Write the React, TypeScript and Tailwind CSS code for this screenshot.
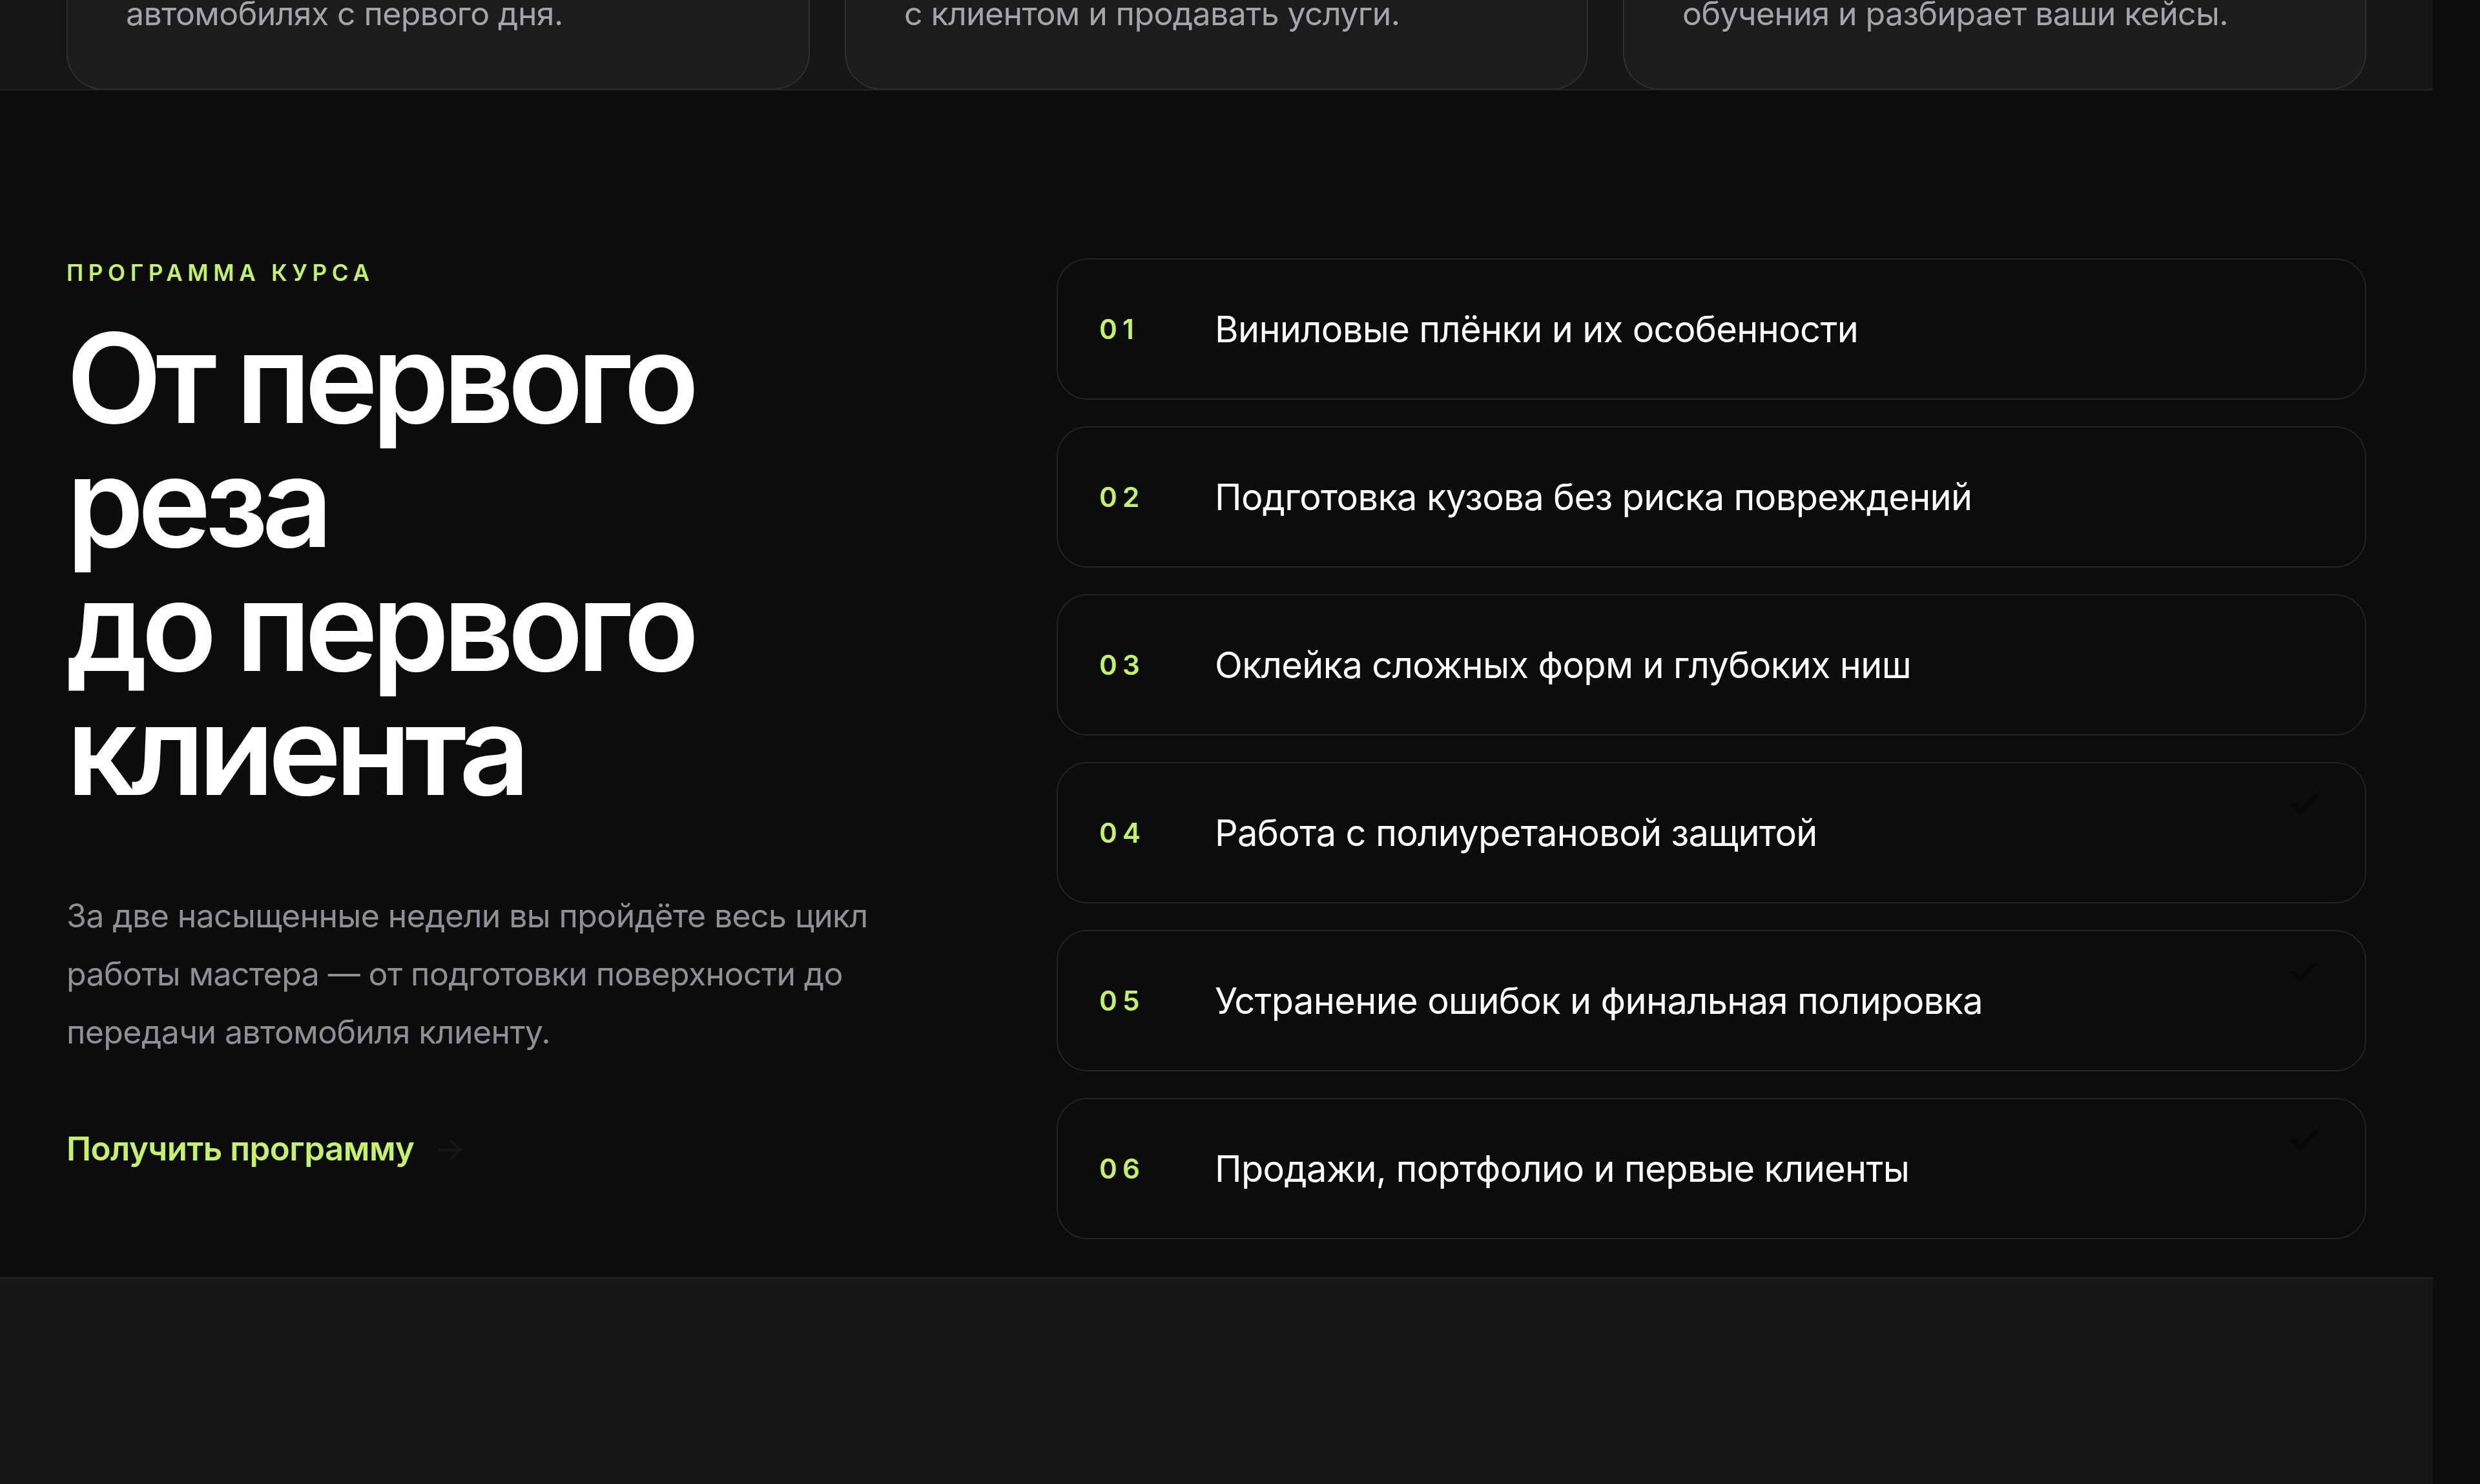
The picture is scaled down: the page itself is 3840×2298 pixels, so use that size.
import React from "react";
import { Check } from "lucide-react";

const cards = [
  ["Отработаете навыки на реальных", "автомобилях с первого дня."],
  ["Научитесь правильно общаться", "с клиентом и продавать услуги."],
  ["Куратор сопровождает на всём пути", "обучения и разбирает ваши кейсы."],
];

const modules = [
  { n: "01", t: "Виниловые плёнки и их особенности", done: false },
  { n: "02", t: "Подготовка кузова без риска повреждений", done: false },
  { n: "03", t: "Оклейка сложных форм и глубоких ниш", done: false },
  { n: "04", t: "Работа с полиуретановой защитой", done: true },
  { n: "05", t: "Устранение ошибок и финальная полировка", done: true },
  { n: "06", t: "Продажи, портфолио и первые клиенты", done: true },
];

export default function App() {
  return (
    <div
      className="flex w-[3840px] h-[2298px] overflow-hidden bg-[#0c0c0c]"
      style={{ fontFamily: "Inter, 'Noto Sans', sans-serif" }}
    >
      <div className="w-[3767px] shrink-0 flex flex-col">
        {/* top section (scrolled) */}
        <section className="h-[140px] shrink-0 bg-[#151615] border-b-2 border-[#222322] overflow-hidden flex items-end px-[103px]">
          <div className="grid grid-cols-3 gap-[54px] w-full items-end">
            {cards.map((c, i) => (
              <div
                key={i}
                className="rounded-b-[56px] border-2 border-t-0 border-[#2e2f2e] bg-[#1b1c1b] pl-[90px] pr-[40px] pb-[84px] mb-[-1px]"
              >
                {c.map((l, j) => (
                  <div key={j} className="text-[50px] leading-[64px] text-[#a4a4aa] tracking-[-0.012em] whitespace-nowrap">
                    {l}
                  </div>
                ))}
              </div>
            ))}
          </div>
        </section>

        {/* program section */}
        <section className="flex-1 bg-[#0c0c0c] px-[103px] pt-[260px] pb-[59px] flex gap-[108px]">
          <div className="w-[1425px] shrink-0 flex flex-col">
            <div className="text-[35px] leading-[41px] font-semibold tracking-[0.22em] text-[#c5f16b] mt-[2px]">
              ПРОГРАММА КУРСА
            </div>
            <h2 className="mt-[46px] text-[192px] leading-[192px] font-semibold tracking-[-0.05em] text-white">
              От первого
              <br />
              реза
              <br />
              до первого
              <br />
              клиента
            </h2>
            <p className="mt-[116px] w-[1320px] text-[50px] leading-[90px] text-[#8f8f95] tracking-[-0.012em]">
              За две насыщенные недели вы пройдёте весь цикл
              <br />
              работы мастера — от подготовки поверхности до
              <br />
              передачи автомобиля клиенту.
            </p>
            <a className="mt-[106px] flex items-center text-[51px] leading-[59px] font-semibold text-[#c5f16b] tracking-[-0.01em]">
              Получить программу
              <span className="ml-[30px] text-[#161616] font-normal">→</span>
            </a>
          </div>

          <div className="flex-1 flex flex-col gap-[41px]">
            {modules.map((m) => (
              <div
                key={m.n}
                className="relative h-[219px] rounded-[48px] border-2 border-[#232323] bg-[#0c0c0c] flex items-center pl-[64px]"
              >
                <span className="w-[179px] shrink-0 text-[42px] font-semibold tracking-[0.2em] text-[#c5f16b]">
                  {m.n}
                </span>
                <span className="text-[56px] leading-[68px] text-white tracking-[-0.012em]">{m.t}</span>
                {m.done && (
                  <Check
                    className="absolute right-[68px] top-[38px] w-[52px] h-[52px] text-[#070707]"
                    strokeWidth={3}
                  />
                )}
              </div>
            ))}
          </div>
        </section>

        {/* next section */}
        <section className="h-[320px] shrink-0 bg-[#151715] border-t-2 border-[#232523]" />
      </div>
      <div className="flex-1 bg-[#0c0c0c]" />
    </div>
  );
}
